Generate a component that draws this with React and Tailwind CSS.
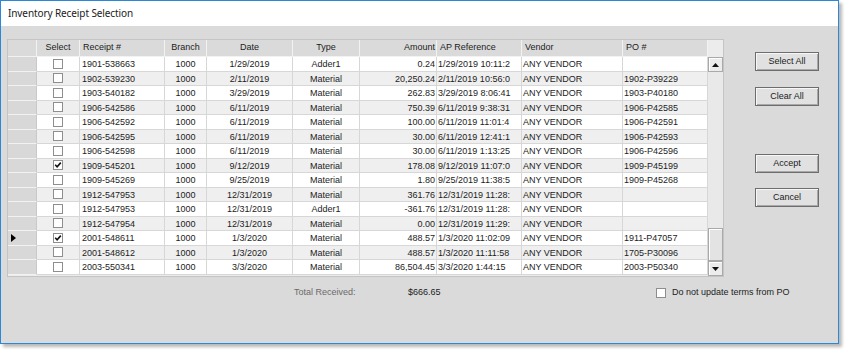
import React from 'react';

const rows = [
  { sel: false, receipt: '1901-538663', date: '1/29/2019', type: 'Adder1', amount: '0.24', ap: '1/29/2019 10:11:2', po: '' },
  { sel: false, receipt: '1902-539230', date: '2/11/2019', type: 'Material', amount: '20,250.24', ap: '2/11/2019 10:56:0', po: '1902-P39229' },
  { sel: false, receipt: '1903-540182', date: '3/29/2019', type: 'Material', amount: '262.83', ap: '3/29/2019 8:06:41', po: '1903-P40180' },
  { sel: false, receipt: '1906-542586', date: '6/11/2019', type: 'Material', amount: '750.39', ap: '6/11/2019 9:38:31', po: '1906-P42585' },
  { sel: false, receipt: '1906-542592', date: '6/11/2019', type: 'Material', amount: '100.00', ap: '6/11/2019 11:01:4', po: '1906-P42591' },
  { sel: false, receipt: '1906-542595', date: '6/11/2019', type: 'Material', amount: '30.00', ap: '6/11/2019 12:41:1', po: '1906-P42593' },
  { sel: false, receipt: '1906-542598', date: '6/11/2019', type: 'Material', amount: '30.00', ap: '6/11/2019 1:13:25', po: '1906-P42596' },
  { sel: true, receipt: '1909-545201', date: '9/12/2019', type: 'Material', amount: '178.08', ap: '9/12/2019 11:07:0', po: '1909-P45199' },
  { sel: false, receipt: '1909-545269', date: '9/25/2019', type: 'Material', amount: '1.80', ap: '9/25/2019 11:38:5', po: '1909-P45268' },
  { sel: false, receipt: '1912-547953', date: '12/31/2019', type: 'Material', amount: '361.76', ap: '12/31/2019 11:28:', po: '' },
  { sel: false, receipt: '1912-547953', date: '12/31/2019', type: 'Adder1', amount: '-361.76', ap: '12/31/2019 11:28:', po: '' },
  { sel: false, receipt: '1912-547954', date: '12/31/2019', type: 'Material', amount: '0.00', ap: '12/31/2019 11:29:', po: '' },
  { sel: true, current: true, receipt: '2001-548611', date: '1/3/2020', type: 'Material', amount: '488.57', ap: '1/3/2020 11:02:09', po: '1911-P47057' },
  { sel: false, receipt: '2001-548612', date: '1/3/2020', type: 'Material', amount: '488.57', ap: '1/3/2020 11:11:58', po: '1705-P30096' },
  { sel: false, receipt: '2003-550341', date: '3/3/2020', type: 'Material', amount: '86,504.45', ap: '3/3/2020 1:44:15', po: '2003-P50340' },
];

const gridCols = 'grid grid-cols-[29px_43px_85px_42px_86px_67px_77px_85px_101px_85px]';

const CheckBox = ({ checked }) => (
  <span className="inline-flex w-[10px] h-[10px] bg-white border border-[#8e8e8e] items-center justify-center">
    {checked && (
      <svg width="8" height="8" viewBox="0 0 8 8">
        <path d="M1.2 3.8 L3.1 5.8 L6.8 1.6" fill="none" stroke="#111" strokeWidth="1.6" />
      </svg>
    )}
  </span>
);

const WinButton = ({ label, className = '' }) => (
  <button className={`w-[64px] h-[19px] bg-[#e1e1e1] border border-[#6d6d6d] text-[9px] text-[#1a1a1a] flex items-center justify-center shadow-[inset_1px_1px_0_#f7f7f7,inset_-1px_-1px_0_#a8a8a8] ${className}`}>
    {label}
  </button>
);

const Arrow = ({ up }) => (
  <div className="h-[15px] bg-[#ececec] border border-[#a9a9a9] shadow-[inset_1px_1px_0_#ffffff] flex items-center justify-center">
    <svg width="7" height="4" viewBox="0 0 7 4">
      {up ? <polygon points="0,4 7,4 3.5,0" fill="#111" /> : <polygon points="0,0 7,0 3.5,4" fill="#111" />}
    </svg>
  </div>
);

const cell = 'border-r border-b border-[#d7d7d7] px-[2px] overflow-hidden whitespace-nowrap leading-[14px]';

export default function App() {
  return (
    <div className="w-[845px] h-[350px] bg-white font-['Liberation_Sans',Arial,sans-serif] text-[#1c1c1c]">
      <div className="w-[839px] h-[344px] border border-[#2b88d8] flex flex-col shadow-[3px_3px_3px_rgba(0,0,0,0.28)]">
        <div className="h-[25px] bg-white flex items-center pl-[7px] text-[10px] text-[#1a1a1a] font-['Noto_Sans',sans-serif] tracking-[-0.1px]">
          Inventory Receipt Selection
        </div>
        <div className="flex-1 bg-[#dadada] pt-[13px] pl-[6px]">
          <div className="flex">
            <div className="w-[717px] h-[238px] border border-[#c4c4c4] bg-[#ececec] flex text-[9px]">
              <div className="w-[700px] flex flex-col">
                <div className={`${gridCols} h-[17px] bg-[#dadada]`}>
                  {['', 'Select', 'Receipt #', 'Branch', 'Date', 'Type', 'Amount', 'AP Reference', 'Vendor', 'PO #'].map((h, i) => (
                    <div
                      key={i}
                      className={`border-r border-b border-[#f2f2f2] px-[3px] flex items-center whitespace-nowrap overflow-hidden ${
                        i === 1 || i === 3 || i === 4 || i === 5 ? 'justify-center' : i === 6 ? 'justify-end pr-[1px]' : 'justify-start'
                      }`}
                    >
                      {h}
                    </div>
                  ))}
                </div>
                {rows.map((r, i) => (
                  <div key={i} className={`${gridCols} h-[14.5px] ${i % 2 === 0 ? 'bg-white' : 'bg-[#efefef]'}`}>
                    <div className="bg-[#d8d8d8] border-r border-[#c9c9c9] border-b border-b-[#f2f2f2] flex items-center pl-[3px]">
                      {r.current && (
                        <svg width="5" height="8" viewBox="0 0 5 8">
                          <polygon points="0,0 5,4 0,8" fill="#000" />
                        </svg>
                      )}
                    </div>
                    <div className={`${cell} flex items-center justify-center`}>
                      <CheckBox checked={r.sel} />
                    </div>
                    <div className={cell}>{r.receipt}</div>
                    <div className={`${cell} text-center`}>1000</div>
                    <div className={`${cell} text-center`}>{r.date}</div>
                    <div className={`${cell} text-center`}>{r.type}</div>
                    <div className={`${cell} text-right !pr-[1px]`}>{r.amount}</div>
                    <div className={`${cell} !pl-[1px]`}>{r.ap}</div>
                    <div className={`${cell} !pl-[1px]`}>ANY VENDOR</div>
                    <div className={`${cell} !pl-[1px]`}>{r.po}</div>
                  </div>
                ))}
              </div>
              <div className="w-[15px] flex flex-col">
                <div className="h-[17px] bg-[#ececec]" />
                <Arrow up />
                <div className="flex-1 bg-[#e9e9e9] flex flex-col justify-end">
                  <div className="h-[33px] bg-[#e3e3e3] border border-[#a9a9a9] shadow-[inset_1px_1px_0_#ffffff]" />
                </div>
                <Arrow />
              </div>
            </div>
            <div className="ml-[31px] mt-[13px] flex flex-col">
              <WinButton label="Select All" />
              <WinButton label="Clear All" className="mt-[16px]" />
              <WinButton label="Accept" className="mt-[48px]" />
              <WinButton label="Cancel" className="mt-[15px]" />
            </div>
          </div>
          <div className="flex items-center h-[14px] mt-[9px] pl-[287px] text-[9px]">
            <span className="w-[114px] text-[#6a6a6a]">Total Received:</span>
            <span className="w-[248px] text-[#1c1c1c]">$666.65</span>
            <CheckBox />
            <span className="ml-[6px]">Do not update terms from PO</span>
          </div>
        </div>
      </div>
    </div>
  );
}
